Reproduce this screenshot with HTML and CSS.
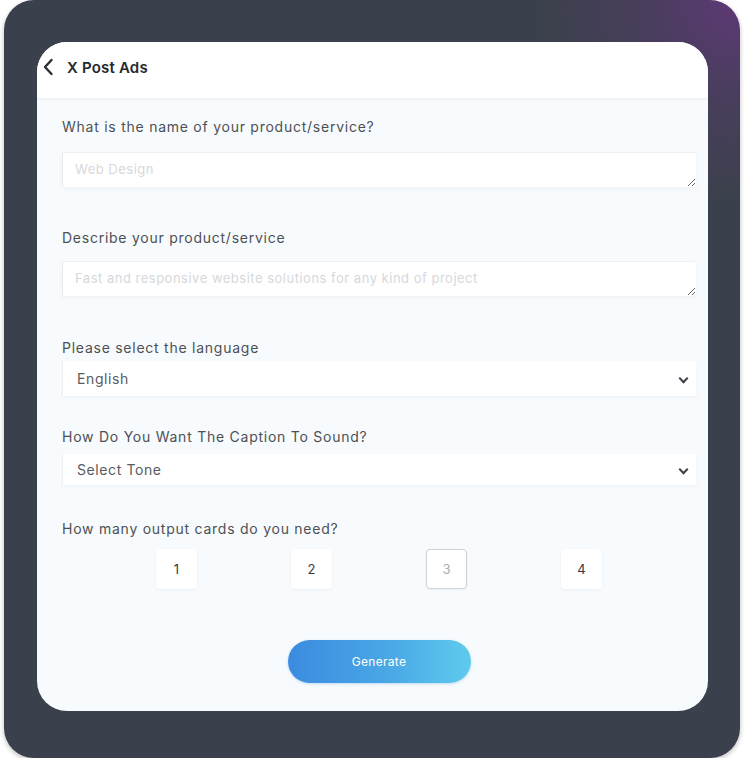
FILE: index.html
```html
<!DOCTYPE html>
<html lang="en">
<head>
    <meta charset="UTF-8">
    <meta name="viewport" content="width=device-width, initial-scale=1.0">
    <title>X Post Ads</title>
    <link rel="stylesheet" href="styles.css">
</head>
<body>
    <div class="frame">
        <div class="card">
            <div class="card-header">
                <svg class="back-icon" width="14" height="18" viewBox="0 0 14 18">
                    <path d="M9.5 2 L3 9 L9.5 16" fill="none" stroke="#2b2f36" stroke-width="2.4" stroke-linecap="round" stroke-linejoin="round"/>
                </svg>
                <h1>X Post Ads</h1>
            </div>

            <form class="ad-form">
                <div class="field-group area-group">
                    <label for="product-name">What is the name of your product/service?</label>
                    <textarea id="product-name" rows="1" placeholder="Web Design"></textarea>
                </div>

                <div class="field-group area-group desc-group">
                    <label for="product-desc">Describe your product/service</label>
                    <textarea id="product-desc" rows="1" placeholder="Fast and responsive website solutions for any kind of project"></textarea>
                </div>

                <div class="field-group select-group">
                    <label for="language">Please select the language</label>
                    <div class="select-box">
                        <select id="language">
                            <option>English</option>
                        </select>
                    </div>
                </div>

                <div class="field-group select-group tone-group">
                    <label for="tone">How Do You Want The Caption To Sound?</label>
                    <div class="select-box">
                        <select id="tone">
                            <option>Select Tone</option>
                        </select>
                    </div>
                </div>

                <div class="field-group cards-group">
                    <label>How many output cards do you need?</label>
                    <div class="count-options">
                        <button type="button" class="count-btn">1</button>
                        <button type="button" class="count-btn">2</button>
                        <button type="button" class="count-btn active">3</button>
                        <button type="button" class="count-btn">4</button>
                    </div>
                </div>

                <div class="submit-row">
                    <button type="button" class="generate-btn">Generate</button>
                </div>
            </form>
        </div>
    </div>
</body>
</html>
```

FILE: styles.css
```css
* {
    box-sizing: border-box;
    margin: 0;
    padding: 0;
}

body {
    background-color: #ffffff;
    font-family: 'Inter', 'Open Sans', sans-serif;
    color: #4a4d52;
}

.frame {
    width: 736px;
    height: 758px;
    margin-left: 4px;
    padding: 42px 32px 47px 33px;
    border-radius: 30px;
    background:
        radial-gradient(circle at 100% 0%, rgba(96, 56, 120, 0.95) 0, rgba(88, 58, 112, 0.5) 90px, rgba(60, 64, 76, 0) 200px),
        #3b414c;
    box-shadow: 0 2px 5px rgba(0, 0, 0, 0.25);
}

.card {
    height: 100%;
    background-color: #f8fbfd;
    border-radius: 30px;
    overflow: hidden;
}

.card-header {
    height: 58px;
    display: flex;
    align-items: center;
    gap: 11px;
    padding: 0 0 6px 5px;
    background-color: #ffffff;
    border-bottom: 2px solid #f0f3f6;
}

.back-icon {
    flex-shrink: 0;
}

.card-header h1 {
    font-size: 15px;
    font-weight: 600;
    letter-spacing: 0.2px;
    color: #25282d;
}

.ad-form {
    padding: 17px 12px 0 25px;
}

.field-group label {
    display: block;
    font-size: 14px;
    line-height: 20px;
    letter-spacing: 0.75px;
    color: #4d5055;
}

.area-group {
    margin-bottom: 41px;
}

.area-group label {
    margin-bottom: 15px;
}

.desc-group {
    margin-bottom: 42px;
}

.desc-group label {
    margin-bottom: 13px;
}

.select-group {
    margin-bottom: 31px;
}

.select-group label {
    margin-bottom: 3px;
}

.tone-group {
    margin-bottom: 34px;
}

.tone-group label {
    margin-bottom: 7px;
}

textarea {
    display: block;
    width: 100%;
    height: 35px;
    padding: 8px 12px;
    border: none;
    border-left: 1px solid #e8eaed;
    border-top: 1px solid #eef0f2;
    border-radius: 2px;
    background-color: #ffffff;
    box-shadow: 0 2px 4px rgba(0, 0, 0, 0.04);
    font-family: inherit;
    font-size: 13px;
    letter-spacing: 0.5px;
    color: #444;
    resize: vertical;
}

textarea::placeholder {
    color: #d6d8db;
}

.select-box {
    position: relative;
}

.select-box::after {
    content: '';
    position: absolute;
    right: 9px;
    top: 50%;
    width: 5px;
    height: 5px;
    margin-top: -4px;
    border-right: 2px solid #3b3f46;
    border-bottom: 2px solid #3b3f46;
    transform: rotate(45deg);
    pointer-events: none;
}

select {
    display: block;
    width: 100%;
    height: 35px;
    padding: 0 14px;
    border: none;
    border-left: 1px solid #eceef0;
    background-color: #ffffff;
    box-shadow: 0 2px 4px rgba(0, 0, 0, 0.03);
    font-family: inherit;
    font-size: 14px;
    letter-spacing: 0.6px;
    color: #585b61;
    appearance: none;
    -webkit-appearance: none;
}

.tone-group select {
    height: 31px;
}

.cards-group label {
    margin-bottom: 10px;
}

.count-options {
    display: flex;
    justify-content: space-evenly;
}

.count-btn {
    width: 41px;
    height: 40px;
    border: 1px solid transparent;
    border-radius: 4px;
    background-color: #ffffff;
    box-shadow: 0 1px 3px rgba(0, 0, 0, 0.05);
    font-family: inherit;
    font-size: 13px;
    color: #35383d;
}

.count-btn.active {
    border-color: #cfd2d6;
    color: #a9acb1;
}

.submit-row {
    display: flex;
    justify-content: center;
    margin-top: 51px;
}

.generate-btn {
    width: 183px;
    height: 43px;
    border: none;
    border-radius: 22px;
    background: linear-gradient(90deg, #3b8bdf 0%, #4aa8e6 55%, #5ecbed 100%);
    box-shadow: 0 1px 3px rgba(59, 139, 223, 0.3);
    font-family: inherit;
    font-size: 12px;
    font-weight: 400;
    letter-spacing: 0.3px;
    color: #ffffff;
}
```
